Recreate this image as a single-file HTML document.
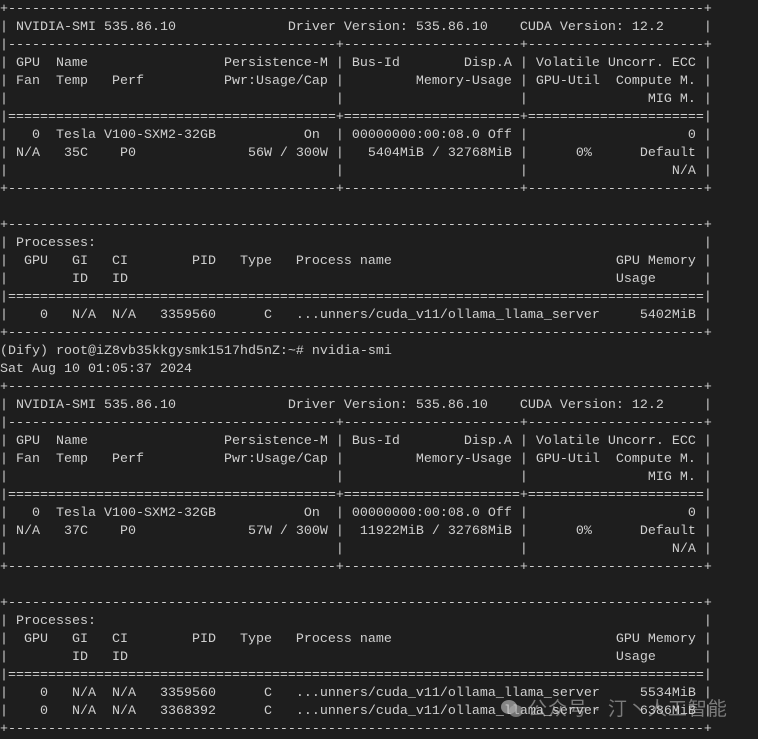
<!DOCTYPE html>
<html><head><meta charset="utf-8"><style>
html,body{margin:0;padding:0;background:#1e1e1e;width:758px;height:737px;overflow:hidden}
pre{margin:0;padding:0;position:absolute;left:0;top:1px;font-family:"Liberation Mono",monospace;font-size:13.333px;line-height:18px;color:#cfcfcf;white-space:pre}
.wm{position:absolute;left:500px;top:694px;font-family:"Liberation Sans","Noto Sans CJK SC",sans-serif;font-size:19px;color:rgba(200,200,200,0.55);letter-spacing:1px}
.wm svg{vertical-align:-5px;margin-right:4px}
</style></head><body>
<pre>+---------------------------------------------------------------------------------------+
| NVIDIA-SMI 535.86.10              Driver Version: 535.86.10    CUDA Version: 12.2     |
|-----------------------------------------+----------------------+----------------------+
| GPU  Name                 Persistence-M | Bus-Id        Disp.A | Volatile Uncorr. ECC |
| Fan  Temp   Perf          Pwr:Usage/Cap |         Memory-Usage | GPU-Util  Compute M. |
|                                         |                      |               MIG M. |
|=========================================+======================+======================|
|   0  Tesla V100-SXM2-32GB           On  | 00000000:00:08.0 Off |                    0 |
| N/A   35C    P0              56W / 300W |   5404MiB / 32768MiB |      0%      Default |
|                                         |                      |                  N/A |
+-----------------------------------------+----------------------+----------------------+

+---------------------------------------------------------------------------------------+
| Processes:                                                                            |
|  GPU   GI   CI        PID   Type   Process name                            GPU Memory |
|        ID   ID                                                             Usage      |
|=======================================================================================|
|    0   N/A  N/A   3359560      C   ...unners/cuda_v11/ollama_llama_server     5402MiB |
+---------------------------------------------------------------------------------------+
(Dify) root@iZ8vb35kkgysmk1517hd5nZ:~# nvidia-smi
Sat Aug 10 01:05:37 2024
+---------------------------------------------------------------------------------------+
| NVIDIA-SMI 535.86.10              Driver Version: 535.86.10    CUDA Version: 12.2     |
|-----------------------------------------+----------------------+----------------------+
| GPU  Name                 Persistence-M | Bus-Id        Disp.A | Volatile Uncorr. ECC |
| Fan  Temp   Perf          Pwr:Usage/Cap |         Memory-Usage | GPU-Util  Compute M. |
|                                         |                      |               MIG M. |
|=========================================+======================+======================|
|   0  Tesla V100-SXM2-32GB           On  | 00000000:00:08.0 Off |                    0 |
| N/A   37C    P0              57W / 300W |  11922MiB / 32768MiB |      0%      Default |
|                                         |                      |                  N/A |
+-----------------------------------------+----------------------+----------------------+

+---------------------------------------------------------------------------------------+
| Processes:                                                                            |
|  GPU   GI   CI        PID   Type   Process name                            GPU Memory |
|        ID   ID                                                             Usage      |
|=======================================================================================|
|    0   N/A  N/A   3359560      C   ...unners/cuda_v11/ollama_llama_server     5534MiB |
|    0   N/A  N/A   3368392      C   ...unners/cuda_v11/ollama_llama_server     6386MiB |
+---------------------------------------------------------------------------------------+</pre>
<div class="wm"><svg width="24" height="22" viewBox="0 0 24 22"><ellipse cx="9" cy="9" rx="8" ry="7" fill="rgba(200,200,200,0.6)"/><ellipse cx="16" cy="13" rx="7" ry="6" fill="rgba(170,170,170,0.6)"/></svg>公众号 · 汀丶人工智能</div>
</body></html>
